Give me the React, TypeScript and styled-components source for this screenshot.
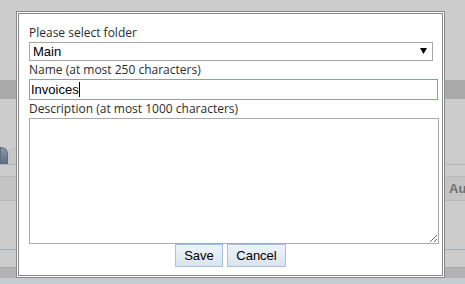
import React from 'react';
import styled, {createGlobalStyle} from 'styled-components';

const GlobalStyle = createGlobalStyle`
  html, body {
    margin: 0;
    padding: 0;
  }
  body {
    background: #cccccc;
    overflow: hidden;
  }
`;

export default function App() {
    return (
        <>
            <GlobalStyle/>
            <Page>
                <Band $h={80}/>
                <Band $h={19} $bg={'#aaaaaa'}/>
                <Band $h={47}/>
                <TabRow>
                    <Tab $w={8} $active/>
                    <Tab $w={60}/>
                </TabRow>
                <Band $h={11}/>
                <HeaderRow>
                    <HeaderCell>Au</HeaderCell>
                </HeaderRow>
                <Band $h={38}/>
                <Band $h={11} $line={'#9fb1c3'}/>
                <Band $h={18} $line={'#aaaaaa'}/>
                <Band $h={10} $bg={'#b2b2b2'}/>
                <Band $h={6} $bg={'#c4cdd2'}/>

                <Dialog>
                    <Label>Please select folder</Label>
                    <SelectWrap>
                        <FolderSelect defaultValue="main">
                            <option value="main">Main</option>
                        </FolderSelect>
                        <Arrow width="7" height="6" viewBox="0 0 7 6">
                            <path d="M0 0H7L3.5 6Z" fill="#000"/>
                        </Arrow>
                    </SelectWrap>
                    <Label>Name (at most 250 characters)</Label>
                    <InputWrap>
                        <NameInput defaultValue="Invoices"/>
                        <Caret/>
                    </InputWrap>
                    <Label>Description (at most 1000 characters)</Label>
                    <Description/>
                    <Buttons>
                        <Button $w={48}>Save</Button>
                        <Button $w={59}>Cancel</Button>
                    </Buttons>
                </Dialog>
            </Page>
        </>
    );
}

const Page = styled.div`
  position: relative;
  width: 465px;
  height: 284px;
  overflow: hidden;
  background: #cccccc;
  display: flex;
  flex-direction: column;
`;

const Band = styled.div<{ $h: number; $bg?: string; $line?: string }>`
  height: ${p => p.$h}px;
  flex-shrink: 0;
  box-sizing: border-box;
  background: ${p => p.$bg || '#cccccc'};
  border-bottom: ${p => p.$line ? `1px solid ${p.$line}` : 'none'};
`;

const TabRow = styled.div`
  height: 19px;
  flex-shrink: 0;
  box-sizing: border-box;
  display: flex;
  align-items: flex-end;
  gap: 1px;
  border-bottom: 1px solid #b4b4b4;
`;

const Tab = styled.div<{ $w: number; $active?: boolean }>`
  width: ${p => p.$w}px;
  height: 17px;
  box-sizing: border-box;
  border-radius: ${p => p.$active ? '0 7px 0 0' : '7px 7px 0 0'};
  background: ${p => p.$active ? 'linear-gradient(#8a9aab, #5d6d7d)' : '#c8c8c8'};
  border: 1px solid ${p => p.$active ? '#5d6d7d' : '#bdbdbd'};
  border-bottom: none;
`;

const HeaderRow = styled.div`
  height: 25px;
  flex-shrink: 0;
  box-sizing: border-box;
  display: flex;
  align-items: center;
  background: #c4c4c4;
  border-top: 1px solid #b8b8b8;
  border-bottom: 1px solid #b8b8b8;
`;

const HeaderCell = styled.div`
  padding-left: 449px;
  white-space: nowrap;
  font-family: "Liberation Sans", Arial, sans-serif;
  font-size: 13px;
  font-weight: bold;
  color: #707070;
`;

const Dialog = styled.div`
  position: absolute;
  left: 16px;
  top: 11px;
  width: 429px;
  height: 267px;
  box-sizing: border-box;
  border: 3px double #888888;
  background: #ffffff;
  padding: 10px 0 0 10px;
  display: flex;
  flex-direction: column;
  align-items: flex-start;
`;

const Label = styled.label`
  display: block;
  height: 18px;
  line-height: 18px;
  font-family: "Open Sans", "Noto Sans", sans-serif;
  font-size: 12px;
  color: #2b2b2b;
  white-space: nowrap;
`;

const SelectWrap = styled.div`
  position: relative;
  width: 404px;
  height: 19px;
`;

const FolderSelect = styled.select`
  appearance: none;
  width: 100%;
  height: 100%;
  box-sizing: border-box;
  margin: 0;
  padding: 0 0 0 3px;
  border: 1px solid #a6a6a6;
  border-radius: 0;
  background: #ffffff;
  font-family: "Liberation Sans", Arial, sans-serif;
  font-size: 13px;
  color: #000000;
  outline: none;
`;

const Arrow = styled.svg`
  position: absolute;
  right: 6px;
  top: 6px;
  pointer-events: none;
`;

const InputWrap = styled.div`
  position: relative;
  width: 409px;
  height: 21px;
`;

const NameInput = styled.input`
  width: 100%;
  height: 100%;
  box-sizing: border-box;
  margin: 0;
  padding: 0 1px;
  border: 1px solid #7a9fe0;
  border-radius: 0;
  outline: none;
  font-family: "Liberation Sans", Arial, sans-serif;
  font-size: 13px;
  color: #000000;
`;

const Caret = styled.span`
  position: absolute;
  left: 50px;
  top: 3px;
  width: 1px;
  height: 15px;
  background: #000000;
  pointer-events: none;
`;

const Description = styled.textarea`
  width: 410px;
  height: 126px;
  box-sizing: border-box;
  margin: 0;
  padding: 2px;
  border: 1px solid #a9a9a9;
  border-radius: 0;
  outline: none;
  font-family: "Liberation Sans", Arial, sans-serif;
  font-size: 13px;
`;

const Buttons = styled.div`
  align-self: stretch;
  margin-right: 10px;
  display: flex;
  justify-content: center;
  gap: 4px;
`;

const Button = styled.button<{ $w: number }>`
  width: ${p => p.$w}px;
  height: 23px;
  box-sizing: border-box;
  margin: 0;
  padding: 0;
  border: 1px solid #a6c2dc;
  border-radius: 0;
  background: linear-gradient(#eef3f9, #dae4ef);
  font-family: "Liberation Sans", Arial, sans-serif;
  font-size: 13px;
  color: #000000;
  cursor: pointer;
`;
